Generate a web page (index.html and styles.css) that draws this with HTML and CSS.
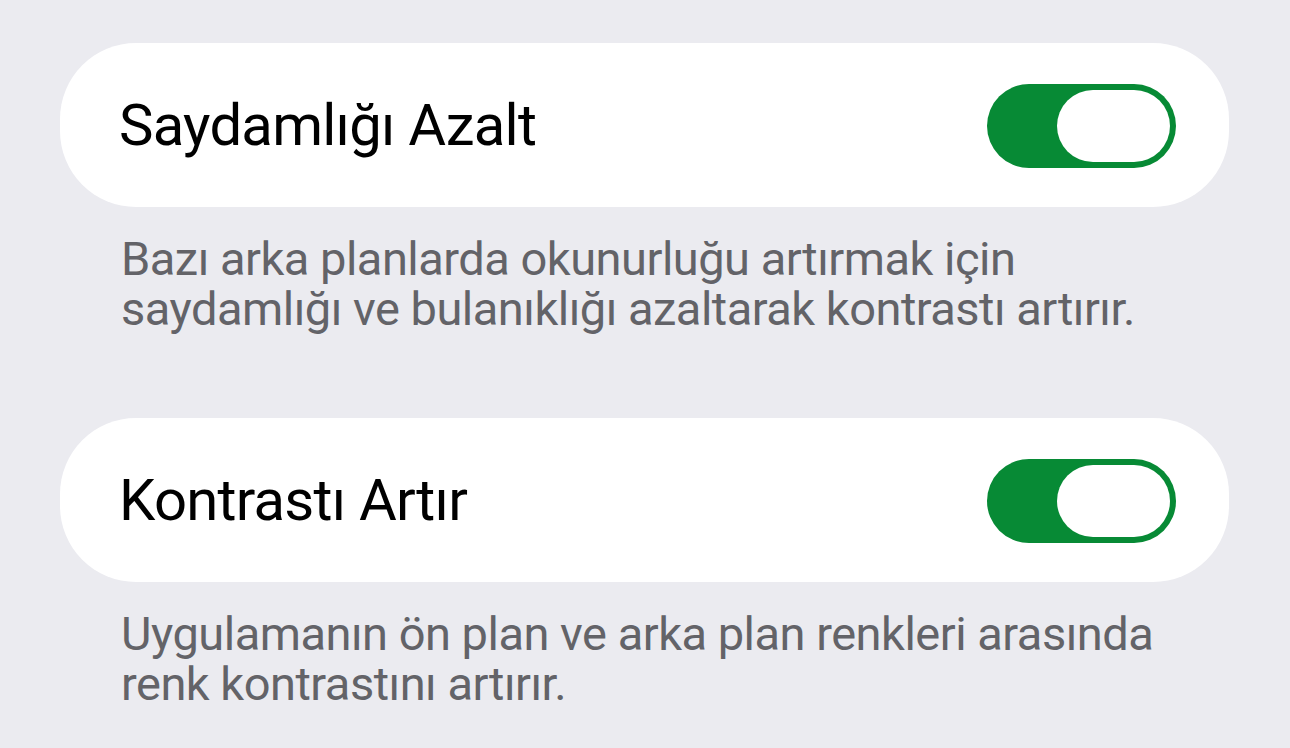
FILE: index.html
```html
<!DOCTYPE html>
<html lang="tr">
  <head>
    <meta charset="UTF-8" />
    <meta name="viewport" content="width=device-width, initial-scale=1.0" />
    <title>Erişilebilirlik</title>
    <link rel="stylesheet" href="styles.css">
  </head>
  <body>
    <div class="settings">
      <div class="group">
        <div class="card">
          <span class="card-title">Saydamlığı Azalt</span>
          <div class="switch on"><div class="knob"></div></div>
        </div>
        <p class="footnote">
          Bazı arka planlarda okunurluğu artırmak için<br />
          saydamlığı ve bulanıklığı azaltarak kontrastı artırır.
        </p>
      </div>

      <div class="group">
        <div class="card">
          <span class="card-title">Kontrastı Artır</span>
          <div class="switch on"><div class="knob"></div></div>
        </div>
        <p class="footnote">
          Uygulamanın ön plan ve arka plan renkleri arasında<br />
          renk kontrastını artırır.
        </p>
      </div>
    </div>
  </body>
</html>
```

FILE: styles.css
```css
:root {
  --background: #ebebf0;
  --card: #ffffff;
  --label: #000000;
  --secondary-label: #636368;
  --green: #078a35;
}

body {
  margin: 0;
  background-color: var(--background);
  font-family: Roboto, "Noto Sans", sans-serif;
  color: var(--label);
}

.settings {
  display: flex;
  flex-direction: column;
  gap: 84px;
  padding: 43px 61px 0 60px;
}

.card {
  display: flex;
  align-items: center;
  justify-content: space-between;
  height: 164px;
  padding: 0 53px 0 59px;
  background-color: var(--card);
  border-radius: 76px;
}

.card-title {
  font-size: 58px;
  letter-spacing: -0.75px;
}

.switch {
  display: flex;
  justify-content: flex-end;
  width: 189px;
  height: 84px;
  padding: 6px;
  box-sizing: border-box;
  border-radius: 42px;
  background-color: var(--green);
  margin-top: 2px;
}

.knob {
  width: 113px;
  height: 72px;
  border-radius: 36px;
  background-color: var(--card);
}

.footnote {
  margin: 27px 0 0 61px;
  font-size: 47px;
  line-height: 50px;
  letter-spacing: -0.5px;
  white-space: nowrap;
  color: var(--secondary-label);
}
```
